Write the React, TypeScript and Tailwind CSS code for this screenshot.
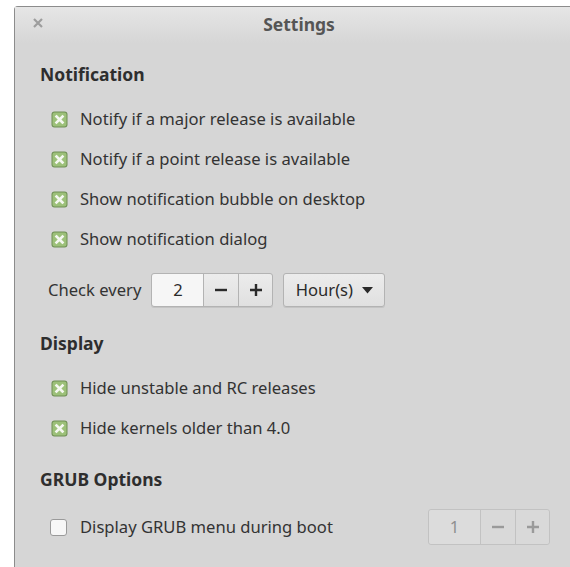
import React from "react";

function CheckedBox() {
  return (
    <svg width="17" height="17" viewBox="0 0 17 17" className="shrink-0">
      <rect x="0.5" y="0.5" width="16" height="16" rx="3" fill="#6f8f55" />
      <rect x="1.5" y="1.5" width="14" height="14" rx="2" fill="#9cc079" />
      <path d="M5.5 5.5 L11.5 11.5 M11.5 5.5 L5.5 11.5" stroke="#f4f7f0" strokeWidth="2.6" strokeLinecap="square" />
    </svg>
  );
}

function EmptyBox() {
  return (
    <div className="h-[17px] w-[17px] shrink-0 rounded-[3px] border border-[#9a9a9a] bg-[#f7f7f7]" />
  );
}

function CheckRow({ label }: { label: string }) {
  return (
    <div className="flex h-[40px] items-center">
      <div className="ml-[11px] mr-[12px] flex">
        <CheckedBox />
      </div>
      <span className="leading-none">{label}</span>
    </div>
  );
}

function Heading({ children }: { children: React.ReactNode }) {
  return (
    <div className="flex h-[28px] items-center text-[17.5px] font-bold leading-none text-[#2e2e2e]">{children}</div>
  );
}

function SpinBox({ value, disabled }: { value: string; disabled?: boolean }) {
  const fg = disabled ? "text-[#9a9a9a]" : "text-[#2a2a2a]";
  return (
    <div
      className={`flex rounded-[3px] border ${
        disabled ? "h-[36px] border-[#c2c2c2]" : "h-[34px] border-[#b3b3b3] shadow-[0_1px_0_#c4c4c4]"
      }`}
    >
      <div
        className={`flex w-[51px] items-center justify-center rounded-l-[3px] ${
          disabled ? "bg-[#dcdcdc] text-[#8f8f8f]" : "bg-[#f6f6f6] text-[#2a2a2a]"
        }`}
      >
        {value}
      </div>
      <div
        className={`flex w-[35px] items-center justify-center border-l ${
          disabled ? "border-[#c2c2c2] bg-[#d9d9d9]" : "border-[#b3b3b3] bg-gradient-to-b from-[#ececec] to-[#e0e0e0]"
        } ${fg}`}
      >
        <svg width="14" height="14" viewBox="0 0 14 14">
          <path d="M1 7 H13" stroke="currentColor" strokeWidth="2.4" />
        </svg>
      </div>
      <div
        className={`flex w-[34px] items-center justify-center rounded-r-[3px] border-l ${
          disabled ? "border-[#c2c2c2] bg-[#d9d9d9]" : "border-[#b3b3b3] bg-gradient-to-b from-[#ececec] to-[#e0e0e0]"
        } ${fg}`}
      >
        <svg width="14" height="14" viewBox="0 0 14 14">
          <path d="M1 7 H13 M7 1 V13" stroke="currentColor" strokeWidth="2.4" />
        </svg>
      </div>
    </div>
  );
}

export default function App() {
  return (
    <div
      className="h-[567px] w-[570px] overflow-hidden bg-white pl-[14px] pt-[6px] text-[16.6px] text-[#333333]"
      style={{ fontFamily: '"Noto Sans", "Open Sans", sans-serif' }}
    >
      <div className="h-full w-full rounded-tl-[4px] border-l border-t border-[#8c8c8c] bg-[#d6d6d6]">
        {/* title bar */}
        <div className="relative flex h-[36px] items-center justify-center bg-gradient-to-b from-[#e6e6e6] to-[#d6d6d6] pl-[13px]">
          <svg className="absolute left-[18px] top-[11px]" width="10" height="10" viewBox="0 0 10 10">
            <path d="M1 1 L9 9 M9 1 L1 9" stroke="#9d9d9d" strokeWidth="2.2" />
          </svg>
          <span className="text-[17.5px] font-bold leading-none text-[#555555]">Settings</span>
        </div>

        <div className="pl-[25px]">
          <div className="h-[18px]" />
          <Heading>Notification</Heading>
          <div className="h-[10px]" />
          <CheckRow label="Notify if a major release is available" />
          <CheckRow label="Notify if a point release is available" />
          <CheckRow label="Show notification bubble on desktop" />
          <CheckRow label="Show notification dialog" />

          <div className="mt-[14px] flex items-center">
            <span className="ml-[8px] mr-[10px] leading-none">Check every</span>
            <SpinBox value="2" />
            <div className="ml-[10px] flex h-[34px] w-[102px] items-center justify-center gap-[9px] rounded-[3px] border border-[#b3b3b3] bg-gradient-to-b from-[#ececec] to-[#e0e0e0] shadow-[0_1px_0_#c4c4c4]">
              <span className="leading-none text-[#2a2a2a]">Hour(s)</span>
              <svg width="11" height="7" viewBox="0 0 11 7">
                <path d="M0 0 H11 L5.5 6.5 Z" fill="#2a2a2a" />
              </svg>
            </div>
          </div>

          <div className="h-[23px]" />
          <Heading>Display</Heading>
          <div className="h-[10px]" />
          <CheckRow label="Hide unstable and RC releases" />
          <CheckRow label="Hide kernels older than 4.0" />

          <div className="h-[18px]" />
          <Heading>GRUB Options</Heading>
          <div className="mt-[15px] flex h-[36px] items-center pr-[20px]">
            <div className="ml-[10px] mr-[13px] flex">
              <EmptyBox />
            </div>
            <span className="leading-none">Display GRUB menu during boot</span>
            <div className="ml-auto">
              <SpinBox value="1" disabled />
            </div>
          </div>
        </div>
      </div>
    </div>
  );
}
